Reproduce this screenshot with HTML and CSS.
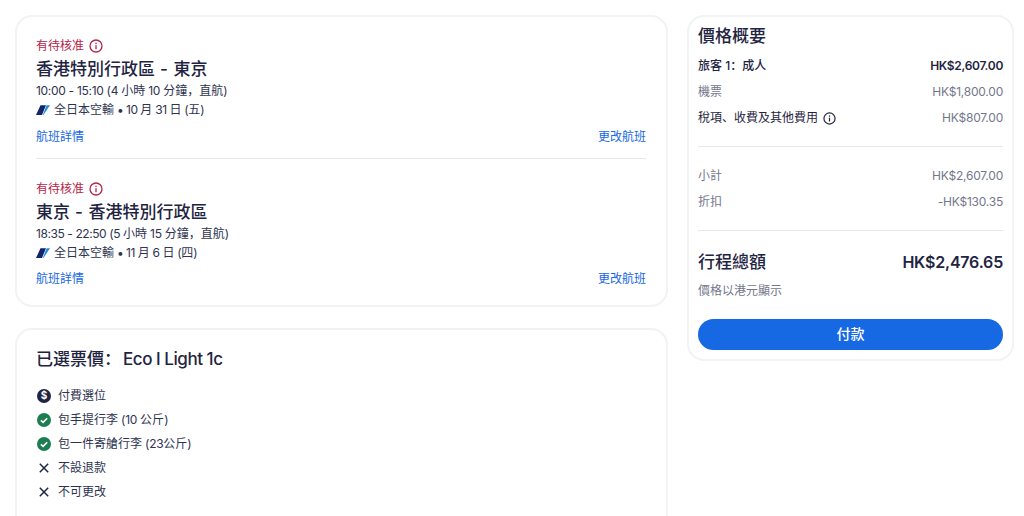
FILE: index.html
```html
<!DOCTYPE html>
<html lang="en">
<head>
<meta charset="utf-8">
<title>價格概要</title>
<link rel="stylesheet" href="styles.css">
</head>
<body>
<svg class="defs" width="0" height="0">
  <symbol id="info" viewBox="0 0 14 14"><circle cx="7" cy="7" r="6" fill="none" stroke="currentColor" stroke-width="1.3"/><rect x="6.35" y="6.2" width="1.3" height="4" fill="currentColor"/><rect x="6.35" y="3.7" width="1.3" height="1.4" fill="currentColor"/></symbol>
  <symbol id="ana" viewBox="0 0 14 10"><path d="M4.5 0.3 H10 L6 10 H0 Z" fill="#13256b"/><path d="M10.6 0.3 H14 L7.4 10 H6.8 Z" fill="#1b8ee0"/></symbol>
  <symbol id="check" viewBox="0 0 14 14"><circle cx="7" cy="7" r="7" fill="#1f7d53"/><path d="M3.9 7.3 L6.1 9.4 L10.2 5.3" fill="none" stroke="#fff" stroke-width="1.6"/></symbol>
  <symbol id="cross" viewBox="0 0 14 14"><path d="M2.8 2.8 L11.2 11.2 M11.2 2.8 L2.8 11.2" fill="none" stroke="#1f2442" stroke-width="1.5"/></symbol>
</svg>
<main class="page">
  <div class="left">
    <section class="card flights">
      <article class="leg">
        <div class="status">有待核准 <svg class="ico-info"><use href="#info"/></svg></div>
        <h2 class="route">香港特別行政區<span class="dash"> - </span>東京</h2>
        <p class="line"><span class="lat">10:00 - 15:10 (4 </span>小時<span class="lat"> 10 </span>分鐘，直航<span class="lat">)</span></p>
        <p class="line airline"><svg class="ico-ana"><use href="#ana"/></svg><span>全日本空輸<span class="date"> • 10 </span>月<span class="date"> 31 </span>日<span class="date"> (</span>五<span class="date">)</span></span></p>
        <div class="links"><a>航班詳情</a><a>更改航班</a></div>
      </article>
      <hr class="rule">
      <article class="leg">
        <div class="status">有待核准 <svg class="ico-info"><use href="#info"/></svg></div>
        <h2 class="route">東京<span class="dash"> - </span>香港特別行政區</h2>
        <p class="line"><span class="tight">18:35 - 22:50 (5 </span>小時<span class="lat"> 15 </span>分鐘，直航<span class="lat">)</span></p>
        <p class="line airline"><svg class="ico-ana"><use href="#ana"/></svg><span>全日本空輸<span class="date"> • 11 </span>月<span class="date"> 6 </span>日<span class="date"> (</span>四<span class="date">)</span></span></p>
        <div class="links"><a>航班詳情</a><a>更改航班</a></div>
      </article>
    </section>
    <section class="card fare">
      <h2 class="fare-title">已選票價：<span class="lat-title">Eco I Light 1c</span></h2>
      <ul class="perks">
        <li><svg class="ico" viewBox="0 0 14 14"><circle cx="7" cy="7" r="7" fill="#1f2442"/><text x="7" y="10.4" text-anchor="middle" class="dollar">$</text></svg>付費選位</li>
        <li><svg class="ico"><use href="#check"/></svg>包手提行李<span class="lat"> (10 </span>公斤<span class="lat">)</span></li>
        <li><svg class="ico"><use href="#check"/></svg>包一件寄艙行李<span class="lat"> (23</span>公斤<span class="lat">)</span></li>
        <li><svg class="ico"><use href="#cross"/></svg>不設退款</li>
        <li><svg class="ico"><use href="#cross"/></svg>不可更改</li>
      </ul>
    </section>
  </div>
  <aside class="card summary">
    <h2 class="sum-title">價格概要</h2>
    <div class="row strong"><span>旅客 1：成人</span><span class="amt bold">HK$2,607.00</span></div>
    <div class="row muted"><span>機票</span><span class="amt">HK$1,800.00</span></div>
    <div class="row"><span class="tax">稅項、收費及其他費用 <svg class="ico-info dark"><use href="#info"/></svg></span><span class="amt grey">HK$807.00</span></div>
    <hr class="rule r1">
    <div class="row muted"><span>小計</span><span class="amt">HK$2,607.00</span></div>
    <div class="row muted"><span>折扣</span><span class="amt">-HK$130.35</span></div>
    <hr class="rule r2">
    <div class="total"><span>行程總額</span><span class="total-amt">HK$2,476.65</span></div>
    <p class="note">價格以港元顯示</p>
    <button class="pay">付款</button>
  </aside>
</main>
</body>
</html>
```
FILE: styles.css
```css
* { box-sizing: border-box; }
html, body { margin: 0; height: 516px; overflow: hidden; background: #fff; }
body { font-family: "Inter", "Noto Sans CJK SC", sans-serif; color: #1f2442; font-size: 12px; }
.defs { position: absolute; }
.lat { letter-spacing: -0.3px; }
.tight { letter-spacing: -0.42px; }
.date { letter-spacing: -0.5px; }
.page { display: flex; align-items: flex-start; gap: 19px; padding: 15px 10px 0 15px; }
.left { width: 653px; display: flex; flex-direction: column; gap: 21px; flex: none; }
.card { background: #fff; border: 2px solid #f2f3f5; border-radius: 17px; }
.flights { padding: 20px 20px 0 19px; height: 292px; }
.leg { height: 121px; }
.status { display: flex; align-items: center; gap: 5px; color: #b3264a; font-size: 12px; line-height: 18px; height: 18px; }
.ico-info { width: 14px; height: 14px; }
.ico-info.dark { color: #1f2442; width: 13px; height: 13px; margin-left: 2px; vertical-align: -3px; }
.route { margin: 3px 0 0; font-size: 17px; font-weight: 500; line-height: 22px; }
.dash { letter-spacing: 0.5px; }
.line { margin: 0; font-size: 12px; line-height: 20px; color: #2e3350; }
.line:first-of-type { margin-top: 1px; }
.airline { display: flex; align-items: center; margin-top: -1px; }
.ico-ana { width: 14px; height: 10px; margin-right: 4px; }
.links { display: flex; justify-content: space-between; margin-top: 8px; line-height: 18px; color: #1668e3; }
.rule { border: 0; border-top: 1px solid #e6e7ea; margin: 0; }
.flights .rule { margin: 0 0 21px; }
.flights .leg:last-child .links { margin-top: 7px; }
.fare { padding: 17px 20px 0 19px; height: 240px; }
.fare-title { margin: 0; font-size: 17px; line-height: 24px; font-weight: 500; }
.lat-title { margin-left: 2px; letter-spacing: -0.45px; }
.perks { list-style: none; margin: 13px 0 0; padding: 0; }
.perks li { display: flex; align-items: center; height: 24px; line-height: 24px; color: #2e3350; white-space: pre; }
.ico { width: 14px; height: 14px; flex: none; margin: 0 7px 0 1px; }
.dollar { font-size: 10px; font-weight: 700; fill: #fff; font-family: "Inter", sans-serif; }
.summary { width: 327px; height: 346px; padding: 7px 9px 0; flex: none; }
.sum-title { margin: 0 0 5px; font-size: 17px; line-height: 24px; font-weight: 500; }
.row { display: flex; justify-content: space-between; height: 26px; line-height: 26px; }
.strong { font-weight: 500; }
.amt { letter-spacing: -0.22px; }
.bold { font-weight: 600; letter-spacing: -0.3px; }
.muted { color: #74778c; }
.grey { color: #74778c; }
.r1 { margin: 15px 0 16px; }
.r2 { margin: 15px 0 17px; }
.total { display: flex; justify-content: space-between; font-size: 17px; font-weight: 500; line-height: 28px; }
.total-amt { font-size: 16px; font-weight: 600; letter-spacing: -0.2px; }
.note { margin: 3px 0 0; color: #74778c; line-height: 24px; }
.pay { display: block; width: 100%; height: 31px; margin-top: 16px; padding: 0 0 3px; border: 0; border-radius: 16px; background: #1668e3; color: #fff; font: 500 14px "Inter", "Noto Sans CJK SC", sans-serif; }
```
